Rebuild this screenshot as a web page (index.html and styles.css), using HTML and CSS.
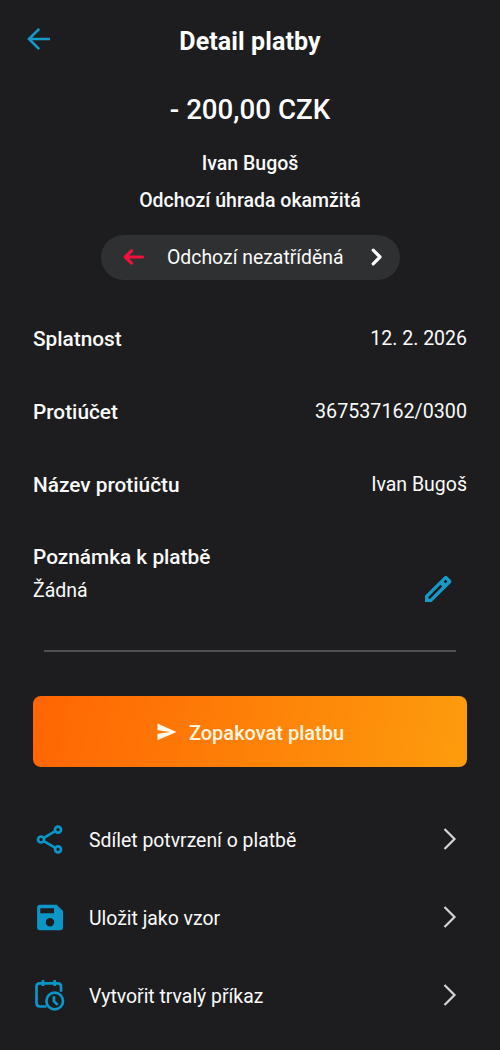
FILE: index.html
```
<!DOCTYPE html>
<html lang="cs">
<head>
<meta charset="utf-8">
<title>Detail platby</title>
<link rel="stylesheet" href="styles.css">
</head>
<body>
<main class="screen">
  <header class="header">
    <svg class="back" viewBox="0 0 24 24"><path d="M23 12H2.500M12.200 1.800 2 12l10.200 10.200"/></svg>
    <h1 class="title">Detail platby</h1>
  </header>

  <section class="summary">
    <div class="amount">- 200,00 CZK</div>
    <div class="party">Ivan Bugoš</div>
    <div class="kind">Odchozí úhrada okamžitá</div>
    <div class="category">
      <svg class="category-arrow" viewBox="0 0 22 18"><path d="M19.500 9H3M8.500 2.900 2.300 9l6.200 6.100"/></svg>
      <span class="category-name">Odchozí nezatříděná</span>
      <svg class="category-chevron" viewBox="0 0 12 18"><path d="M2.200 2.200 9 9l-6.800 6.800"/></svg>
    </div>
  </section>

  <section class="details">
    <div class="row"><span class="label">Splatnost</span><span class="value">12. 2. 2026</span></div>
    <div class="row"><span class="label">Protiúčet</span><span class="value number">367537162/0300</span></div>
    <div class="row"><span class="label">Název protiúčtu</span><span class="value">Ivan Bugoš</span></div>
  </section>

  <section class="note">
    <div class="note-text">
      <div class="label">Poznámka k platbě</div>
      <div class="note-value">Žádná</div>
    </div>
    <svg class="pencil" viewBox="0 0 28 28"><path fill-rule="evenodd" d="M1 27v-6.200L20.300 1.500q1.500-1.300 2.900 0l3.600 3.600q1.300 1.500 0 2.900L7.500 27zM4.400 22v1.700h1.800L18.300 11.600l-1.900-1.900zM19.700 6.600l1.800 1.800 1.900-1.900-1.800-1.800z"/></svg>
  </section>

  <hr class="divider">

  <button class="repeat">
    <svg class="send" viewBox="0 0 20 18"><path d="M.5.500 19.500 9 .5 17.300v-6.500L13 9 .5 7.200z"/></svg>
    <span class="repeat-name">Zopakovat platbu</span>
  </button>

  <nav class="actions">
    <div class="action">
      <svg class="icon" viewBox="0 0 32 32"><g class="line"><circle cx="7" cy="15.500" r="3"/><circle cx="24" cy="5.700" r="3"/><circle cx="24" cy="25.300" r="3"/><path d="m9.800 13.900 11.500-6.700M9.800 17.100l11.500 6.700"/></g></svg>
      <span class="action-name">Sdílet potvrzení o platbě</span>
      <svg class="chevron" viewBox="0 0 14 24"><path d="m1.500 2 10 10-10 10"/></svg>
    </div>
    <div class="action">
      <svg class="icon" viewBox="0 0 32 32"><path class="solid" fill-rule="evenodd" d="M6 2.700h16.700l6.300 6.300v16.300q0 2.900-2.900 2.900H6q-2.900 0-2.900-2.900V5.600q0-2.900 2.900-2.900zM6.300 6.300v5H20v-5zM16 16.100a4.200 4.200 0 1 0 0 8.400 4.200 4.200 0 0 0 0-8.400z"/></svg>
      <span class="action-name">Uložit jako vzor</span>
      <svg class="chevron" viewBox="0 0 14 24"><path d="m1.500 2 10 10-10 10"/></svg>
    </div>
    <div class="action">
      <svg class="icon" viewBox="0 0 32 32"><g class="line"><path d="M12.500 27.500H6q-3.500 0-3.500-3.500V7.500Q2.500 4.300 5.700 4.300h18q3.300 0 3.300 3.300v5.200M9 1v6M20.700 1v6"/><circle cx="20.700" cy="22" r="8.300"/><path d="M19.900 17.300v4.800l3.800 3.800"/></g></svg>
      <span class="action-name">Vytvořit trvalý příkaz</span>
      <svg class="chevron" viewBox="0 0 14 24"><path d="m1.500 2 10 10-10 10"/></svg>
    </div>
  </nav>
</main>
</body>
</html>
```
FILE: styles.css
```
* { box-sizing: border-box; }

body {
  margin: 0;
  background: #1d1d1f;
  color: #fafafa;
  font-family: Roboto, "Noto Sans", sans-serif;
  font-size: 19.5px;
}

svg {
  display: block;
  flex: none;
  fill: none;
}

.screen {
  width: 500px;
  height: 1050px;
  overflow: hidden;
}

.header {
  display: grid;
  grid-template-columns: 56px 1fr 56px;
  align-items: center;
  height: 81px;
}

.back {
  width: 24px;
  height: 24px;
  margin: 0 0 3px 27px;
  stroke: #189ac8;
  stroke-width: 2.6;
}

.title {
  margin: 0;
  padding-top: 2px;
  color: #fff;
  font-size: 25px;
  font-weight: 700;
  line-height: 30px;
  letter-spacing: 0.1px;
  text-align: center;
}

.summary {
  display: flex;
  flex-direction: column;
  align-items: center;
  padding-top: 12px;
  font-weight: 500;
  white-space: nowrap;
}

.amount {
  color: #fff;
  font-size: 27.7px;
  line-height: 33px;
}

.party {
  margin-top: 23px;
  line-height: 30px;
}

.kind {
  margin-top: 7px;
  line-height: 30px;
}

.category {
  display: flex;
  align-items: center;
  width: 299px;
  height: 44.500px;
  margin-top: 19px;
  padding: 0 16.500px 1px 22.500px;
  border-radius: 22.500px;
  background: #2f3032;
  font-weight: 400;
}

.category-arrow {
  width: 22px;
  height: 18px;
  stroke: #f0123c;
  stroke-width: 3.2;
  stroke-linecap: round;
  stroke-linejoin: round;
}

.category-name {
  flex: 1;
  padding: 2px 0 0 22px;
  font-size: 19.4px;
}

.category-chevron {
  width: 12px;
  height: 18px;
  stroke: #fff;
  stroke-width: 3.2;
  stroke-linecap: round;
  stroke-linejoin: round;
}

.details {
  padding: 23.500px 33px 0;
}

.row {
  display: flex;
  align-items: center;
  justify-content: space-between;
  height: 72.700px;
}

.label {
  font-size: 20.8px;
  font-weight: 500;
  line-height: 30px;
}

.value {
  padding-bottom: 1px;
}

.number {
  font-size: 19.7px;
}

.note {
  display: flex;
  align-items: flex-end;
  justify-content: space-between;
  height: 84px;
  padding: 0 48px 0 33px;
}

.note-value {
  margin-top: 4px;
  margin-bottom: -1px;
  line-height: 30px;
}

.pencil {
  width: 28px;
  height: 28px;
  margin-bottom: 2px;
  fill: #189ac8;
}

.divider {
  height: 1.500px;
  margin: 45px 44.500px 0 44px;
  border: 0;
  background: #505052;
}

.repeat {
  display: flex;
  align-items: center;
  justify-content: center;
  gap: 12px;
  width: 434px;
  height: 71px;
  margin: 44.500px 33px 0;
  padding: 0 0 0 1px;
  border: 0;
  border-radius: 8px;
  background: linear-gradient(100deg, #ff6503, #fd9c0d);
  color: #fff5e0;
  font: 500 20px Roboto, sans-serif;
}

.repeat-name {
  padding-top: 2px;
}

.send {
  width: 20px;
  height: 18px;
  fill: #fff8ea;
}

.actions {
  padding: 34px 43px 0 34px;
}

.action {
  display: flex;
  align-items: center;
  height: 77.700px;
}

.icon {
  width: 32px;
  height: 32px;
}

.line {
  stroke: #0b96c8;
  stroke-width: 2.7;
}

.solid {
  fill: #0b96c8;
}

.action-name {
  flex: 1;
  padding: 2px 0 0 23px;
  font-size: 19.4px;
}

.chevron {
  width: 14px;
  height: 24px;
  margin-bottom: 1px;
  stroke: #d4d4d6;
  stroke-width: 2.2;
}
```
